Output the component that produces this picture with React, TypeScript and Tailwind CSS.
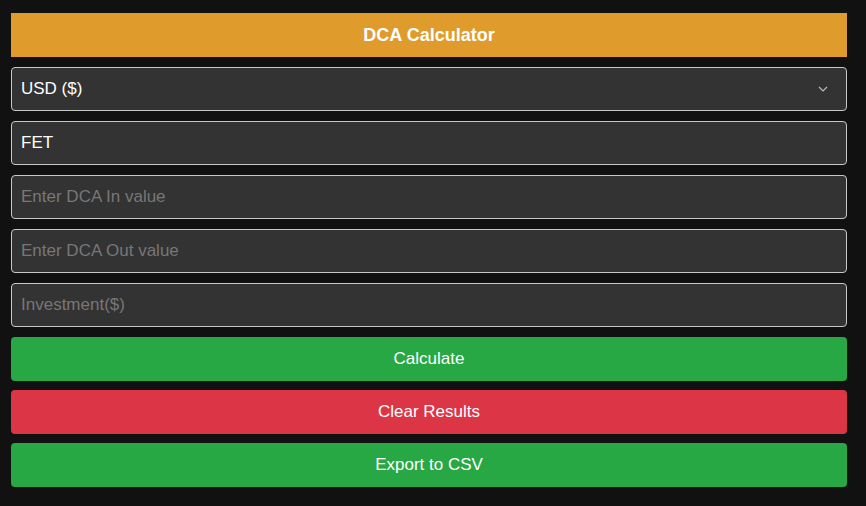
import React, { useState } from "react";

export default function App() {
  const [currency, setCurrency] = useState("USD");
  const [coin, setCoin] = useState("FET");

  const field =
    "h-[44px] w-full rounded-[4px] border border-[#c8c8c8] bg-[#333333] px-[9px] text-[17px] text-white placeholder:text-[#777777] outline-none";
  const btn = "h-[44px] w-full rounded-[4px] text-[17px] text-white";

  return (
    <div className="min-h-screen bg-[#111111] pl-[11px] pr-[19px] pt-[13px] font-['Liberation_Sans',Arial,sans-serif]">
      <div className="flex h-[44px] items-center justify-center bg-[#e09b2d] text-[18px] font-bold text-white">
        DCA Calculator
      </div>
      <div className="mt-[10px] flex flex-col gap-[10px]">
        <div className="relative">
          <select
            value={currency}
            onChange={(e) => setCurrency(e.target.value)}
            className={`${field} appearance-none`}
          >
            <option value="USD">USD ($)</option>
            <option value="EUR">EUR (€)</option>
          </select>
          <svg
            className="pointer-events-none absolute right-[19px] top-[19px] h-[6px] w-[10px] text-[#bbbbbb]"
            viewBox="0 0 10 6"
            fill="none"
            stroke="currentColor"
            strokeWidth="1.2"
          >
            <path d="M1 1l4 4 4-4" />
          </svg>
        </div>
        <input className={field} value={coin} onChange={(e) => setCoin(e.target.value)} />
        <input className={field} placeholder="Enter DCA In value" />
        <input className={field} placeholder="Enter DCA Out value" />
        <input className={field} placeholder="Investment($)" />
      </div>
      <div className="mt-[10px] flex flex-col gap-[9px]">
        <button className={`${btn} bg-[#28a745]`}>Calculate</button>
        <button className={`${btn} bg-[#dc3545]`}>Clear Results</button>
        <button className={`${btn} bg-[#28a745]`}>Export to CSV</button>
      </div>
    </div>
  );
}
